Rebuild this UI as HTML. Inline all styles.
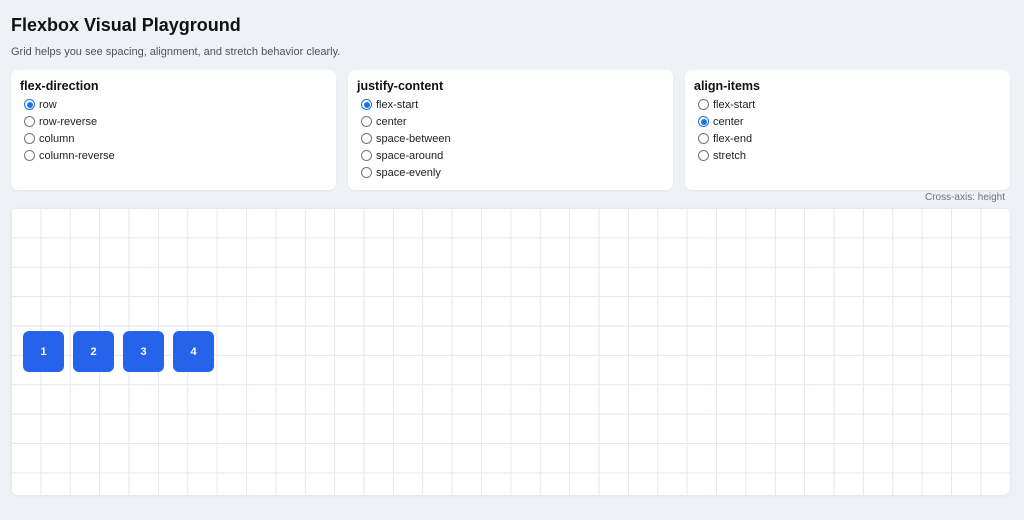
<!DOCTYPE html>
<html><head><meta charset="utf-8"><style>
*{box-sizing:border-box;margin:0;padding:0}
body{width:1024px;height:520px;background:#eef1f6;font-family:"Liberation Sans",sans-serif;color:#111;position:relative;overflow:hidden}
h1{position:absolute;left:11px;top:15px;font-size:18px;font-weight:bold;color:#111}
.sub{position:absolute;left:11px;top:46px;font-size:11px;color:#4b5563}
.card{position:absolute;top:70px;width:325px;height:120px;background:#fff;border-radius:7px;padding:9px 9px;box-shadow:0 1px 2px rgba(0,0,0,.05)}
.card h3{font-size:12.5px;font-weight:bold;margin-bottom:3px;color:#111}
.opt{height:17px;display:flex;align-items:center;font-size:11px;color:#222}
.r{width:11px;height:11px;border:1px solid #767676;border-radius:50%;margin:0 4px 0 4px;background:#fff;position:relative}
.r.on{border-color:#1a73e8}
.r.on::after{content:"";position:absolute;left:1.5px;top:1.5px;width:6px;height:6px;border-radius:50%;background:#1a73e8}
.note{position:absolute;right:19px;top:192px;font-size:10px;color:#6b7280}
.grid{position:absolute;left:11px;top:208px;width:999px;height:287px;border-radius:7px;background-color:#fff;
background-image:linear-gradient(to right,#e3e6ec 1px,transparent 1px),linear-gradient(to bottom,#e3e6ec 1px,transparent 1px);
background-size:29.38px 29.38px;background-position:0 0;box-shadow:0 1px 3px rgba(0,0,0,.06)}
.b{position:absolute;top:123px;width:41px;height:41px;border-radius:6px;background:#2563eb;color:#fff;font-size:11px;font-weight:bold;display:flex;align-items:center;justify-content:center}
</style></head><body>
<h1>Flexbox Visual Playground</h1>
<div class="sub">Grid helps you see spacing, alignment, and stretch behavior clearly.</div>
<div class="card" style="left:11px"><h3>flex-direction</h3>
<div class="opt"><span class="r on"></span>row</div>
<div class="opt"><span class="r"></span>row-reverse</div>
<div class="opt"><span class="r"></span>column</div>
<div class="opt"><span class="r"></span>column-reverse</div></div>
<div class="card" style="left:348px"><h3>justify-content</h3>
<div class="opt"><span class="r on"></span>flex-start</div>
<div class="opt"><span class="r"></span>center</div>
<div class="opt"><span class="r"></span>space-between</div>
<div class="opt"><span class="r"></span>space-around</div>
<div class="opt"><span class="r"></span>space-evenly</div></div>
<div class="card" style="left:685px"><h3>align-items</h3>
<div class="opt"><span class="r"></span>flex-start</div>
<div class="opt"><span class="r on"></span>center</div>
<div class="opt"><span class="r"></span>flex-end</div>
<div class="opt"><span class="r"></span>stretch</div></div>
<div class="note">Cross-axis: height</div>
<div class="grid">
<div class="b" style="left:12px">1</div>
<div class="b" style="left:62px">2</div>
<div class="b" style="left:112px">3</div>
<div class="b" style="left:162px">4</div>
</div>
</body></html>
